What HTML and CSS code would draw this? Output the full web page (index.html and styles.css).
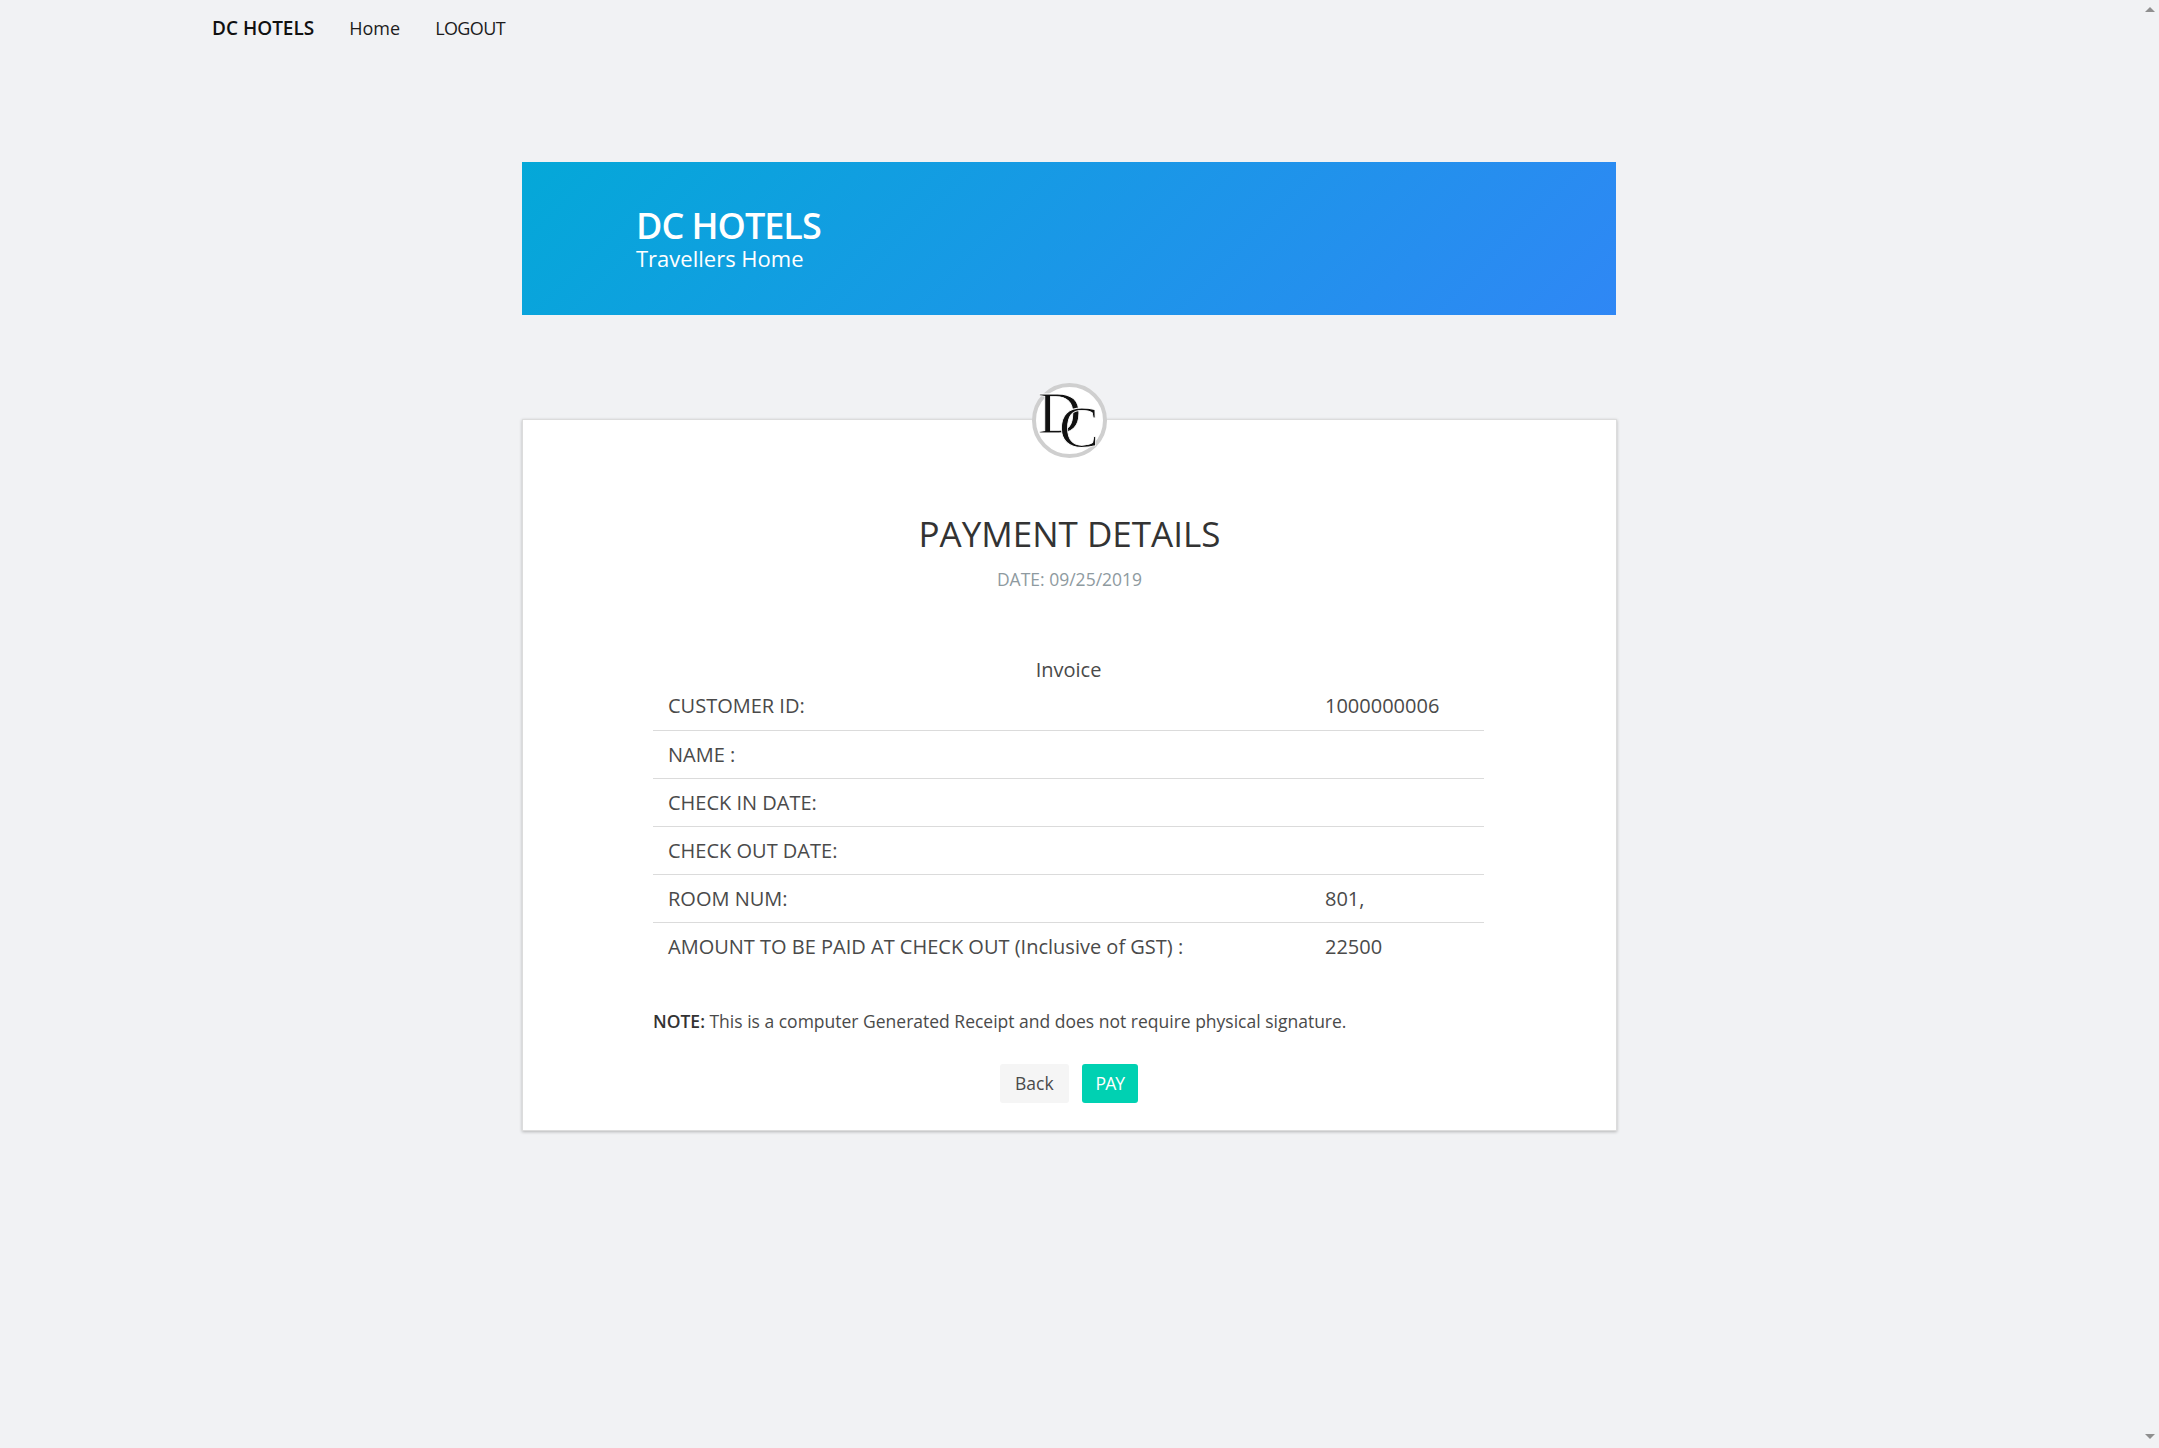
FILE: index.html
```html
<!DOCTYPE html>
<html lang="en">
<head>
  <meta charset="utf-8" />
  <title>DC Hotels - Payment Details</title>
  <link rel="stylesheet" href="styles.css">
</head>
<body>
<nav class="navbar">
  <a href="#" class="brand">DC HOTELS</a>
  <a href="#" class="nav-link">Home</a>
  <a href="#" class="nav-link logout">LOGOUT</a>
</nav>
<div class="scroll-arrow scroll-up"></div>
<div class="scroll-arrow scroll-down"></div>
<main class="page">
  <header class="hero">
    <h1>DC HOTELS</h1>
    <p>Travellers Home</p>
  </header>
  <section class="card">
    <div class="logo"><span class="logo-d">D</span><span class="logo-c">C</span></div>
    <h2>PAYMENT DETAILS</h2>
    <p class="date">DATE: 09/25/2019</p>
    <div class="invoice">
      <table>
        <caption>Invoice</caption>
        <tr><td>CUSTOMER ID:</td><td>1000000006</td></tr>
        <tr><td>NAME :</td><td></td></tr>
        <tr><td>CHECK IN DATE:</td><td></td></tr>
        <tr><td>CHECK OUT DATE:</td><td></td></tr>
        <tr><td>ROOM NUM:</td><td>801,</td></tr>
        <tr><td>AMOUNT TO BE PAID AT CHECK OUT (Inclusive of GST) :</td><td>22500</td></tr>
      </table>
      <p class="note"><b>NOTE:</b> This is a computer Generated Receipt and does not require physical signature.</p>
    </div>
    <div class="buttons">
      <a href="#" class="btn">Back</a>
      <a href="#" class="btn btn-pay">PAY</a>
    </div>
  </section>
</main>
</body>
</html>
```

FILE: styles.css
```css
*{margin:0;padding:0;box-sizing:border-box;}
html,body{height:100%;overflow:hidden;}
body{background:#f1f2f4;font-family:"Open Sans",sans-serif;color:#4a4a4a;}
a{text-decoration:none;}

.navbar{display:flex;align-items:center;height:55px;padding-left:212px;font-size:18px;}
.brand{color:#111;font-size:19px;font-weight:600;margin-right:35px;}
.nav-link{color:#1c1c1c;margin-right:35px;}
.logout{letter-spacing:-.6px;}

.scroll-arrow{position:absolute;left:2145px;width:0;height:0;border-left:5px solid transparent;border-right:5px solid transparent;}
.scroll-up{top:7px;border-bottom:5px solid #8f8f8f;}
.scroll-down{top:1434px;border-top:5px solid #8f8f8f;}

.page{width:1095px;margin:107px 0 0 522px;}

.hero{width:1094px;height:153px;padding:44px 114px;background:linear-gradient(135deg,#04a8d8,#2f87f5);color:#fff;}
.hero h1{font-size:36px;font-weight:600;line-height:40px;letter-spacing:-1px;}
.hero p{margin-top:-1px;font-size:22px;line-height:26px;}

.card{position:relative;height:712px;margin-top:104px;padding:91px 130px 0 130px;background:#fff;border:1px solid #dcdcdc;box-shadow:0 1px 3px rgba(0,0,0,.25);text-align:center;}
.logo{position:absolute;left:509px;top:-37px;width:75px;height:75px;border:4px solid #cfcfcf;border-radius:50%;background:#fff;color:#111;font-family:"Liberation Serif",serif;}
.logo-d{position:absolute;left:2px;top:-4px;font-size:60px;line-height:60px;-webkit-text-stroke:.8px #fff;}
.logo-c{position:absolute;left:23px;top:10px;font-size:60px;line-height:60px;-webkit-text-stroke:.8px #fff;}

.card h2{font-size:35px;font-weight:400;line-height:44px;color:#333;margin-top:1px;}
.date{margin-top:11px;font-size:17.5px;line-height:24px;color:#8e9aa0;}

.invoice{margin-top:54px;text-align:left;}
table{width:831px;border-collapse:collapse;font-size:20px;}
caption{height:37px;padding-top:12px;line-height:25px;text-align:center;}
td{height:48px;padding:0 16px;}
tr+tr td{border-top:1px solid #dbdbdb;}
td:first-child{width:656px;padding-left:15px;}
.note{margin-top:39px;font-size:17.5px;line-height:24px;}
.note b{font-weight:600;color:#333;}

.buttons{display:flex;justify-content:center;gap:13px;margin-top:31px;padding-right:1px;}
.btn{height:39px;padding:0 15px;border-radius:3px;background:#f5f5f5;color:#4a4a4a;font-size:17.5px;line-height:39px;}
.btn-pay{padding:0 14px;background:#00d1b2;color:#fff;letter-spacing:-1px;}
```
